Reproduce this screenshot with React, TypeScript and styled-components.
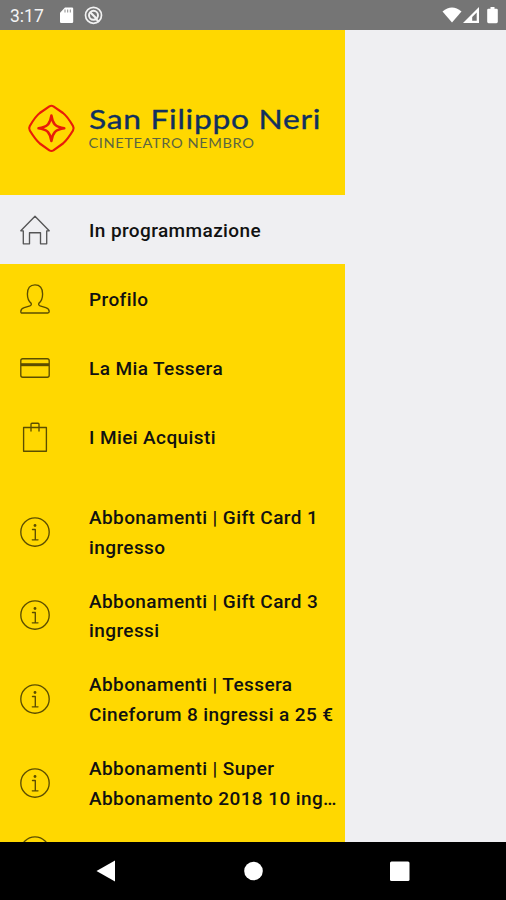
import React from "react";
import styled, { createGlobalStyle } from "styled-components";

const GlobalStyle = createGlobalStyle`
  * { box-sizing: border-box; }
  body { margin: 0; background: #efeff2; overflow: hidden; }
`;

const Screen = styled.div`
  width: 506px;
  height: 900px;
  display: flex;
  flex-direction: column;
  overflow: hidden;
  background: #efeff2;
  font-family: Roboto, sans-serif;
`;

const StatusBar = styled.header`
  flex: 0 0 30px;
  display: flex;
  align-items: center;
  justify-content: space-between;
  padding: 0 7px 0 10px;
  background: #757575;
  color: #fff;
`;

const StatusGroup = styled.div`
  display: flex;
  align-items: center;
`;

const Clock = styled.time`
  width: 48px;
  height: 30px;
  font-size: 17.5px;
  line-height: 32px;
  color: #f4f4f4;
`;

const Drawer = styled.aside`
  flex: 0 0 812px;
  width: 345px;
  overflow: hidden;
  background: #ffd800;
`;

const Brand = styled.div`
  height: 164.5px;
  svg { display: block; }
`;

const MenuGroup = styled.ul`
  list-style: none;
  margin: 0 0 19px;
  padding: 0;
`;

const rowHeights = { regular: 69, double: 83.6, single: 54 };

const MenuItem = styled.li<{ $active?: boolean; $size?: keyof typeof rowHeights }>`
  height: ${(p) => rowHeights[p.$size ?? "regular"]}px;
  display: flex;
  align-items: center;
  padding: 1px 0 0 19px;
  background: ${(p) => (p.$active ? "#efeff2" : "transparent")};
`;

const IconSlot = styled.span`
  flex: 0 0 70px;
  height: 32px;
  color: #000;
  svg { display: block; opacity: 0.64; }
`;

const Label = styled.span`
  width: 254px;
  padding-top: 2px;
  font-size: 19px;
  font-weight: 500;
  line-height: 29.6px;
  letter-spacing: 0.4px;
  color: #111;
`;

const NavBar = styled.nav`
  flex: 0 0 58px;
  display: flex;
  align-items: center;
  justify-content: space-between;
  padding: 0 95px 0 95px;
  background: #000;
`;

const Icon = ({ children }: { children: React.ReactNode }) => (
  <svg width="32" height="32" viewBox="0 0 32 32" fill="none" stroke="currentColor" strokeWidth="1.35" strokeLinejoin="round" strokeLinecap="round">
    {children}
  </svg>
);

const HomeIcon = () => (
  <Icon>
    <path d="M1.8 16.8 16 2.3l14.2 14.5h-2.5v13h-6.2V18.7h-11v11.1H4.3v-13Z" />
  </Icon>
);

const ProfileIcon = () => (
  <Icon>
    <path d="M12.2 20.4c-2.500-2-3.800-5.200-3.800-9.400C8.400 5 11 1.800 16 1.800S23.600 5 23.600 11c0 4.200-1.300 7.400-3.800 9.400-.5 1.500.3 2.300 2 2.800l5 1.500c2.700.8 3.400 2 3.400 3.900 0 1-.4 1.400-1.400 1.400H3.200c-1 0-1.400-.4-1.400-1.400 0-1.900.7-3.100 3.400-3.900l5-1.500c1.700-.5 2.500-1.300 2-2.800Z" />
  </Icon>
);

const CardIcon = () => (
  <Icon>
    <rect x="1.800" y="6.700" width="28.400" height="18.500" rx="2" />
    <path d="M2 12.700h28" strokeWidth="3" strokeLinecap="butt" />
  </Icon>
);

const BagIcon = () => (
  <Icon>
    <path d="M4.600 6.500h22.800v23.700H4.600ZM12 10V3.200q0-1 1-1h6q1 0 1 1V10" />
  </Icon>
);

const InfoIcon = () => (
  <Icon>
    <circle cx="16" cy="16" r="14.200" />
    <circle cx="16" cy="9.500" r="1.400" fill="currentColor" stroke="none" />
    <path d="M13.500 13.500h2.800v10M13.300 23.800h5.700" />
  </Icon>
);

const Logo = () => (
  <svg width="345" height="164" viewBox="0 30 345 164">
    <g fill="none" stroke="#e81c09" strokeLinejoin="round">
      <path strokeWidth="2.200" d="M49.400 106.400Q51.400 105.100 53.400 106.400L63 113Q67.500 116.500 73 126Q74.300 128.300 73 130.500Q67.500 139.500 63 143.500L53.400 150.400Q51.400 151.600 49.400 150.400L39.800 143.500Q35.300 139.500 29.800 130.500Q28.500 128.300 29.800 126Q35.300 116.500 39.800 113Z" />
      <path strokeWidth="2.500" d="M51.400 115.500Q52.200 121.500 55 124.700Q58 127.500 64.300 128.300Q58 129.100 55 131.900Q52.200 135 51.400 141Q50.600 135 47.800 131.900Q44.800 129.100 38.500 128.300Q44.800 127.500 47.800 124.700Q50.600 121.500 51.400 115.500Z" />
    </g>
    <text x="89" y="128.700" textLength="232" lengthAdjust="spacingAndGlyphs" fontFamily="Lato, sans-serif" fontSize="27.500" letterSpacing=".6" fill="#10305f" stroke="#10305f" strokeWidth=".35">San Filippo Neri</text>
    <text x="88.500" y="147.500" textLength="166" lengthAdjust="spacingAndGlyphs" fontFamily="Lato, sans-serif" fontSize="12.800" letterSpacing=".5" fill="#5c6541">CINETEATRO NEMBRO</text>
  </svg>
);

const mainItems = [
  { label: "In programmazione", icon: HomeIcon, active: true },
  { label: "Profilo", icon: ProfileIcon },
  { label: "La Mia Tessera", icon: CardIcon },
  { label: "I Miei Acquisti", icon: BagIcon },
];

const infoItems = [
  "Abbonamenti | Gift Card 1 ingresso",
  "Abbonamenti | Gift Card 3 ingressi",
  "Abbonamenti | Tessera Cineforum 8 ingressi a 25 €",
  "Abbonamenti | Super Abbonamento 2018 10 ing…",
];

export default function App() {
  return (
    <Screen>
      <GlobalStyle />
      <StatusBar>
        <StatusGroup>
          <Clock>3:17</Clock>
          <svg width="50" height="30" viewBox="0 0 50 30">
            <path d="M7 7.500h7q1.200 0 1.200 1.200v13q0 1.300-1.300 1.300H3.300Q2 23 2 21.700v-9Z" fill="#fff" />
            <path d="M7 9.500v3M9.700 9.500v3M12.300 9.500v3" stroke="#8b8b8b" />
            <circle cx="35.500" cy="15.300" r="8" fill="none" stroke="#f2f2f2" strokeWidth="1.700" />
            <circle cx="35.500" cy="15.300" r="4.500" fill="none" stroke="#f2f2f2" strokeWidth="2" />
            <path d="m32 12 7 7" stroke="#f2f2f2" strokeWidth="2.200" />
            <path d="m37 18 4 4" stroke="#f2f2f2" strokeWidth="2" />
          </svg>
        </StatusGroup>
        <svg width="58" height="30" viewBox="441 0 58 30">
          <path d="M442.500 11.500Q452 3.500 461.500 11.500L452 22.500Z" fill="#fff" />
          <path fill="#fff" fillRule="evenodd" d="M463 23 479 7v16ZM472.200 20.800h4.500v-8.300l-4.500 4.500Z" />
          <path d="M490.500 7h4v1.800h2q1.300 0 1.300 1.300v11.700q0 1.400-1.400 1.400h-7.800q-1.400 0-1.400-1.400V10.100q0-1.300 1.300-1.300h2Z" fill="#fff" />
        </svg>
      </StatusBar>
      <Drawer>
        <Brand><Logo /></Brand>
        <MenuGroup>
          {mainItems.map(({ label, icon: Glyph, active }) => (
            <MenuItem key={label} $active={active}>
              <IconSlot><Glyph /></IconSlot>
              <Label>{label}</Label>
            </MenuItem>
          ))}
        </MenuGroup>
        <MenuGroup>
          {infoItems.map((label) => (
            <MenuItem key={label} $size="double">
              <IconSlot><InfoIcon /></IconSlot>
              <Label>{label}</Label>
            </MenuItem>
          ))}
          <MenuItem $size="single">
            <IconSlot><InfoIcon /></IconSlot>
          </MenuItem>
        </MenuGroup>
      </Drawer>
      <NavBar>
        <svg width="22" height="22" viewBox="0 0 22 22"><path d="M1.500 11 20 .5v21Z" fill="#fff" /></svg>
        <svg width="20" height="20" viewBox="0 0 20 20"><circle cx="10.500" cy="10" r="9.300" fill="#fff" /></svg>
        <svg width="22" height="22" viewBox="0 0 22 22"><rect x="1" y="1.500" width="19.500" height="19.500" rx="1.500" fill="#fff" /></svg>
      </NavBar>
    </Screen>
  );
}
